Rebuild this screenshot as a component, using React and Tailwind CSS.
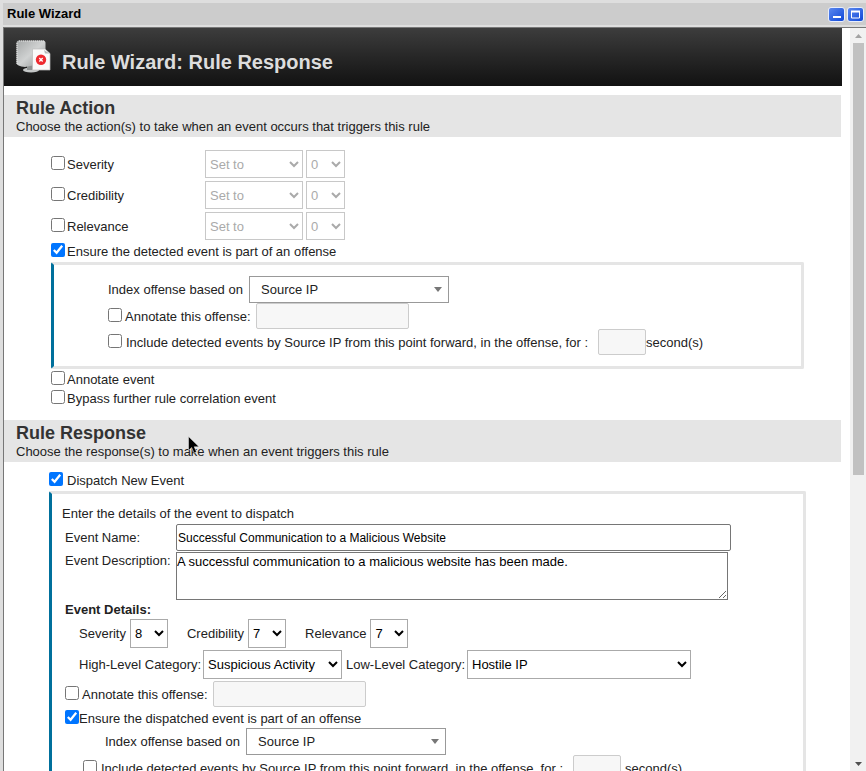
import React, { useId } from "react";

const CHECKBOX = "mb-0.5 size-3.5 shrink-0 accent-[#0075ff]";

function Check({ label, checked = false, gap = "gap-0.5" }) {
  return (
    <label className={`flex items-center ${gap}`}>
      <input type="checkbox" defaultChecked={checked} className={CHECKBOX} />
      <span className="pt-0.5">{label}</span>
    </label>
  );
}

function Banner({ title, text, children }) {
  return (
    <header className="relative mr-px h-[42px] bg-[#e5e5e5] pl-3 pt-1">
      <h2 className="text-lg leading-[18px] font-bold text-[#333]">{title}</h2>
      <p className="leading-5">{text}</p>
      {children}
    </header>
  );
}

function ActionRow({ label }) {
  return (
    <div className="flex h-7 items-center">
      <div className="w-[154px]">
        <Check label={label} />
      </div>
      <select
        disabled
        aria-label={`${label} operation`}
        className="h-7 w-[98px] border border-[#c8c8c8] bg-white text-[#aaa] opacity-100"
      >
        <option>Set to</option>
      </select>
      <select
        disabled
        aria-label={`${label} value`}
        className="ml-[3px] h-7 w-[39px] border border-[#c8c8c8] bg-white text-[#aaa] opacity-100"
      >
        <option>0</option>
      </select>
    </div>
  );
}

function IndexSelect() {
  const id = useId();
  return (
    <div className="flex items-center">
      <label htmlFor={id} className="w-[141px]">
        Index offense based on
      </label>
      <div className="relative">
        <select
          id={id}
          className="block h-[27px] w-[200px] appearance-none border border-[#999] bg-white pl-[11px]"
        >
          <option>Source IP</option>
        </select>
        <svg
          viewBox="0 0 8 5"
          className="pointer-events-none absolute top-[11px] right-[7px] h-[5px] w-2 fill-[#777]"
        >
          <path d="M0 0h8L4 5z" />
        </svg>
      </div>
    </div>
  );
}

function DisabledInput({ width, label }) {
  return (
    <input
      type="text"
      disabled
      aria-label={label}
      className={`h-[26px] rounded-xs border border-[#ccc] bg-[#f7f7f7] ${width}`}
    />
  );
}

function AnnotateOffense() {
  return (
    <div className="flex items-center">
      <div className="w-[148px]">
        <Check label="Annotate this offense:" gap="gap-[3px]" />
      </div>
      <DisabledInput width="w-[153px]" label="Offense annotation" />
    </div>
  );
}

function IncludeEvents({ gap }) {
  return (
    <div className={`flex items-center whitespace-nowrap ${gap}`}>
      <div className="flex items-center">
        <div className="w-[490px]">
          <Check
            label="Include detected events by Source IP from this point forward, in the offense, for :"
            gap="gap-1"
          />
        </div>
        <DisabledInput width="w-12" label="Number of seconds" />
      </div>
      <span className="pt-0.5">second(s)</span>
    </div>
  );
}

function NumberSelect({ label, value }) {
  return (
    <label className="flex items-center gap-1">
      {label}
      <select
        defaultValue={value}
        className="h-[29px] w-[38px] border border-[#aaa] bg-white text-black"
      >
        <option>{value}</option>
      </select>
    </label>
  );
}

function ServerIcon() {
  return (
    <svg viewBox="0 0 36 34" className="h-[34px] w-9">
      <defs>
        <linearGradient id="tower" x1="0" y1="0" x2="1" y2="1">
          <stop offset="0" stopColor="#a5a8a8" />
          <stop offset="0.5" stopColor="#d0d2d2" />
          <stop offset="1" stopColor="#8d9191" />
        </linearGradient>
      </defs>
      <ellipse cx="15" cy="30" rx="8" ry="2.5" fill="#c4c7c7" />
      <path d="M11 25h11v5H11z" fill="#8e9292" />
      <path d="M3 0.5h24q2.500 0 2.500 2.500v20L9 27Q0.500 26 0.500 23V3Q0.500 0.500 3 0.500z" fill="url(#tower)" />
      <path d="M1 3v21" stroke="#eee" strokeWidth="1" strokeDasharray="1 1" />
      <path d="M3 1h25" stroke="#e8e8e8" strokeWidth="1" strokeDasharray="1 1" />
      <path d="M16.500 9h12.500l5 4.500v16.500H16.500z" fill="#fafafa" stroke="#bbb" strokeWidth="0.700" />
      <path d="M28 10l1 3.500h4.500z" fill="#b5b8b8" />
      <circle cx="25" cy="19.700" r="5.200" fill="#ee2a30" />
      <path d="M23.300 18l3.400 3.400m0-3.400l-3.400 3.400" stroke="#fff" strokeWidth="1.400" />
    </svg>
  );
}

function WindowButton({ label, children }) {
  return (
    <button
      type="button"
      aria-label={label}
      className="h-[15px] w-[17px] rounded-[3px] border border-[#e8eefc] bg-linear-to-br from-[#5b87ee] to-[#0b45d8]"
    >
      <svg viewBox="0 0 15 13" className="h-[13px] w-[15px]" fill="none" stroke="#fff">
        {children}
      </svg>
    </button>
  );
}

export default function App() {
  return (
    <div
      className="flex h-screen flex-col overflow-hidden bg-[#dedede] pl-[3px] text-[13px] leading-[18px] text-[#222]"
      style={{ fontFamily: '"Liberation Sans", Arial, sans-serif' }}
    >
      <div className="mt-[3px] flex h-[22px] shrink-0 items-center justify-between bg-[#ccc] pr-0.5 pl-1">
        <span className="font-bold text-black">Rule Wizard</span>
        <div className="flex gap-0.5">
          <WindowButton label="Minimize">
            <path d="M4 9h8" strokeWidth="2" />
          </WindowButton>
          <WindowButton label="Maximize">
            <path d="M3.500 4v6h8V4" />
            <path d="M3 3.500h9" strokeWidth="2" />
          </WindowButton>
        </div>
      </div>

      <div className="mt-0.5 flex min-h-0 flex-1 border-t border-l border-[#777] bg-white">
        <main className="mr-2 min-w-0 flex-1 overflow-hidden">
          <header className="flex h-[58px] items-start bg-linear-to-b from-[#3d3d3d] to-[#121212] pt-3 pl-3">
            <ServerIcon />
            <h1 className="ml-[10px] pt-[10px] text-xl leading-6 font-bold text-[#ddd]">
              Rule Wizard: Rule Response
            </h1>
          </header>

          <section className="mt-[9px]">
            <Banner
              title="Rule Action"
              text="Choose the action(s) to take when an event occurs that triggers this rule"
            />
            <div className="mt-[13px] mr-[38px] ml-[47px]">
              <div className="flex flex-col gap-[3px]">
                <ActionRow label="Severity" />
                <ActionRow label="Credibility" />
                <ActionRow label="Relevance" />
              </div>
              <div className="flex h-[22px] items-center">
                <Check label="Ensure the detected event is part of an offense" checked />
              </div>
              <div className="flex flex-col rounded-xs border-3 border-[#e5e5e5] border-l-[#00709c] py-[11px] pl-[54px]">
                <IndexSelect />
                <AnnotateOffense />
                <IncludeEvents gap="gap-0" />
              </div>
              <div className="flex h-[19px] items-center">
                <Check label="Annotate event" />
              </div>
              <div className="flex h-[19px] items-center">
                <Check label="Bypass further rule correlation event" />
              </div>
            </div>
          </section>

          <section className="mt-[13px]">
            <Banner
              title="Rule Response"
              text="Choose the response(s) to make when an event triggers this rule"
            >
              <svg
                viewBox="0 0 12 19"
                className="pointer-events-none absolute top-4 left-[184px] h-[19px] w-3"
              >
                <path
                  d="M.5.500v14l3.200-3 2.300 5.500 2.500-1-2.300-5.200h4.800z"
                  fill="#000"
                  stroke="#eee"
                  strokeWidth="0.500"
                />
              </svg>
            </Banner>
            <div className="mt-[7px] mr-9 ml-[45px]">
              <div className="flex h-[22px] items-center">
                <Check label="Dispatch New Event" gap="gap-1" checked />
              </div>
              <div className="rounded-xs border-3 border-[#e5e5e5] border-l-[#00709c] pt-[10px] pb-10 pl-[10px]">
                <p className="leading-5">Enter the details of the event to dispatch</p>
                <div className="pl-[3px]">
                  <div className="flex items-center">
                    <label htmlFor="event-name" className="w-[111px]">
                      Event Name:
                    </label>
                    <input
                      id="event-name"
                      type="text"
                      defaultValue="Successful Communication to a Malicious Website"
                      className="h-[27px] w-[555px] rounded-xs border border-[#767676] bg-white px-px text-xs text-black"
                    />
                  </div>
                  <div className="mt-px flex items-start">
                    <label htmlFor="event-description" className="w-[111px] whitespace-nowrap">
                      Event Description:
                    </label>
                    <textarea
                      id="event-description"
                      defaultValue="A successful communication to a malicious website has been made."
                      className="block h-12 w-[552px] resize border border-[#767676] bg-white text-black"
                    />
                  </div>
                  <h3 className="mt-px leading-[18px] font-bold">Event Details:</h3>
                  <div className="flex gap-[19px] pl-[14px]">
                    <NumberSelect label="Severity" value="8" />
                    <NumberSelect label="Credibility" value="7" />
                    <NumberSelect label="Relevance" value="7" />
                  </div>
                  <div className="mt-0.5 flex gap-1 pl-[14px] whitespace-nowrap">
                    <label className="flex items-center">
                      <span className="w-[124px]">High-Level Category:</span>
                      <select className="h-[29px] w-[139px] border border-[#aaa] bg-white text-black">
                        <option>Suspicious Activity</option>
                      </select>
                    </label>
                    <label className="flex items-center">
                      <span className="w-[121px]">Low-Level Category:</span>
                      <select className="h-[29px] w-[224px] border border-[#aaa] bg-white text-black">
                        <option>Hostile IP</option>
                      </select>
                    </label>
                  </div>
                  <div className="mt-0.5">
                    <AnnotateOffense />
                  </div>
                  <div className="flex h-[21px] items-center">
                    <Check
                      label="Ensure the dispatched event is part of an offense"
                      gap="gap-0"
                      checked
                    />
                  </div>
                  <div className="pl-10">
                    <IndexSelect />
                  </div>
                  <div className="pl-[18px]">
                    <IncludeEvents gap="gap-1" />
                  </div>
                </div>
              </div>
            </div>
          </section>
        </main>

        <div aria-hidden="true" className="flex w-4 shrink-0 flex-col items-center bg-[#f1f1f1]">
          <svg viewBox="0 0 15 15" className="size-[15px] shrink-0 fill-[#a3a3a3]">
            <path d="M4 10h7L7.500 6z" />
          </svg>
          <div className="h-[432px] w-[11px] shrink-0 bg-[#c1c1c1]" />
          <svg viewBox="0 0 15 15" className="mt-auto size-[15px] shrink-0 fill-[#505050]">
            <path d="M4 6h7l-3.500 4z" />
          </svg>
        </div>
      </div>
    </div>
  );
}
